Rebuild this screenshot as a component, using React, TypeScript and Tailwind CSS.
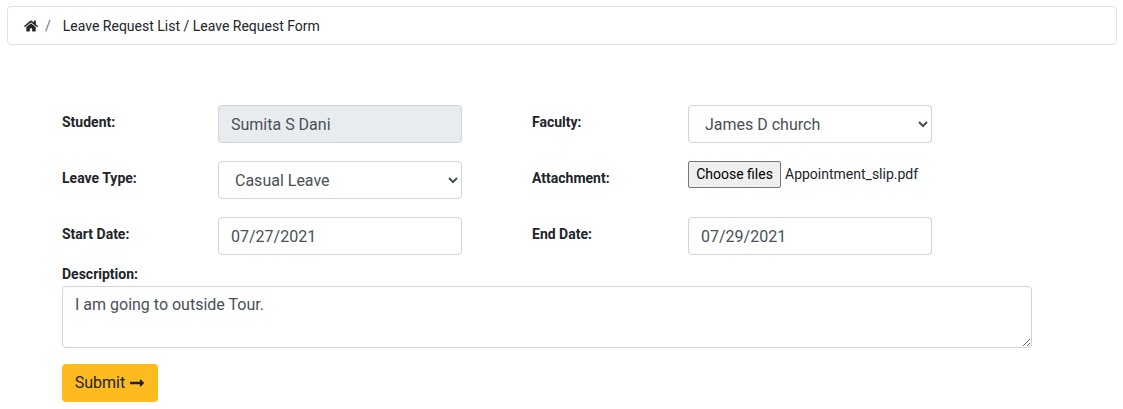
import { FaHome, FaLongArrowAltRight } from "react-icons/fa";

const label = "text-sm font-bold leading-[21px] text-[#212529]";
const control =
  "block h-[38px] w-[244px] rounded border border-[#ced4da] bg-white px-3 py-1.5 text-base leading-6 text-[#495057] outline-none";

export default function App() {
  return (
    <div className="min-h-[409px] bg-white font-['Roboto',sans-serif] text-sm text-[#212529]">
      <div className="px-[7px] pt-[6px]">
        <nav className="flex h-[39px] w-[1110px] items-center rounded border border-[#dee2e6] px-4 text-sm">
          <FaHome className="h-[14px] w-[14px]" />
          <span className="ml-[7px] text-[#6c757d]">/</span>
          <span className="ml-3">Leave Request List / Leave Request Form</span>
        </nav>
      </div>
      <form className="pt-[60px] pl-[62px]" onSubmit={(e) => e.preventDefault()}>
        <div className="grid grid-cols-[156px_314px_156px_244px] grid-rows-[56px_56px_38px]">
          <label className={`${label} pt-[7px]`}>Student:</label>
          <input className="block h-[38px] w-[244px] rounded border border-[#ced4da] bg-[#e9ecef] px-3 py-1.5 text-base leading-6 text-[#495057]" readOnly value="Sumita S Dani" />
          <label className={`${label} pt-[7px]`}>Faculty:</label>
          <select className={control}>
            <option>James D church</option>
          </select>
          <label className={`${label} pt-[7px]`}>Leave Type:</label>
          <select className={control}>
            <option>Casual Leave</option>
          </select>
          <label className={`${label} pt-[7px]`}>Attachment:</label>
          <div className="flex items-start">
            <button type="button" className="h-[27px] w-[93px] rounded-[2px] border border-[#767676] bg-[#efefef] text-sm leading-[21px] text-black">Choose files</button>
            <span className="ml-1 leading-[27px]">Appointment_slip.pdf</span>
          </div>
          <label className={`${label} pt-[7px]`}>Start Date:</label>
          <input className={control} defaultValue="07/27/2021" />
          <label className={`${label} pt-[7px]`}>End Date:</label>
          <input className={control} defaultValue="07/29/2021" />
        </div>
        <label className={`${label} mt-[9px] block`}>Description:</label>
        <textarea
          className="mt-[1px] block h-[62px] w-[970px] rounded border border-[#ced4da] bg-white px-3 py-1.5 text-base leading-6 text-[#495057]"
          defaultValue="I am going to outside Tour."
        />
        <button className="mt-4 flex h-[38px] w-24 items-center justify-center rounded bg-[#fdbb1f] text-base text-[#212529]">
          Submit
          <FaLongArrowAltRight className="ml-1 h-4 w-4" />
        </button>
      </form>
    </div>
  );
}
